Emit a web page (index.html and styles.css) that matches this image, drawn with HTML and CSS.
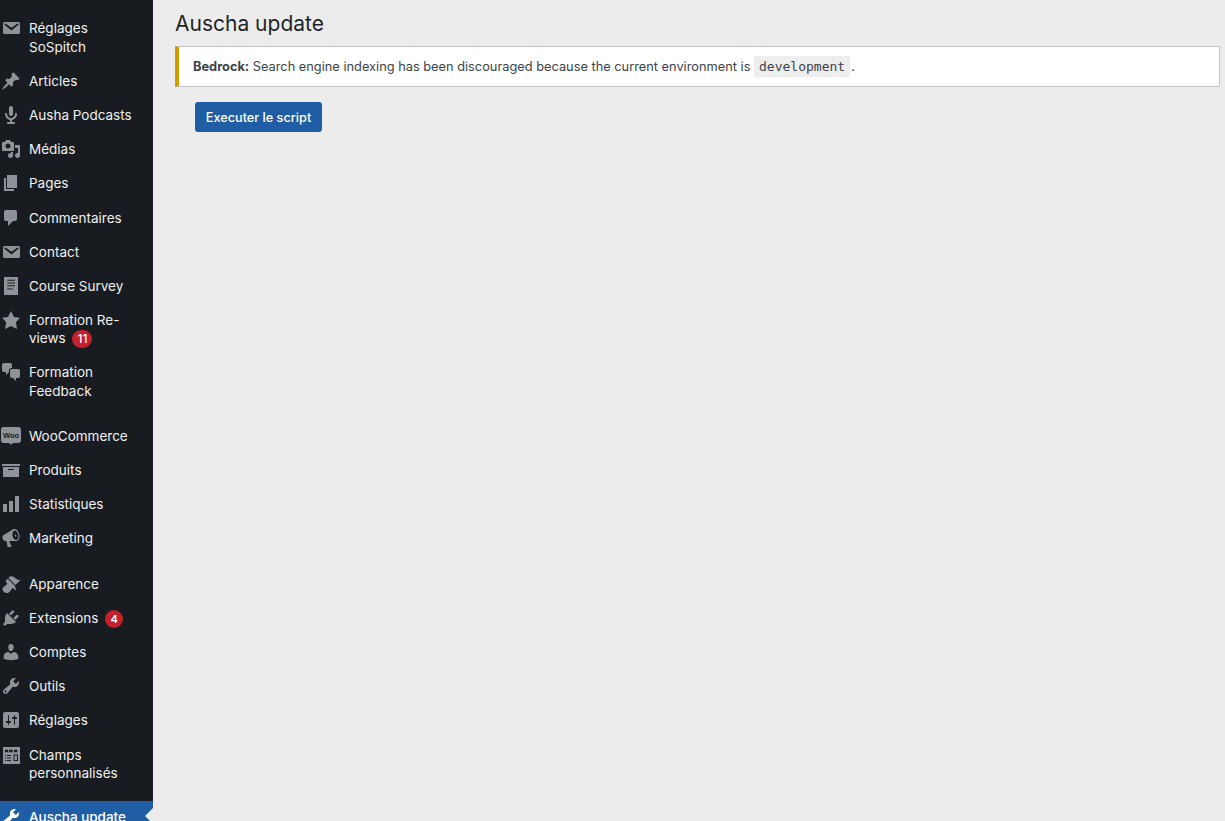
FILE: index.html
```html
<!DOCTYPE html>
<html lang="fr">
<head>
<meta charset="utf-8">
<title>Auscha update</title>
<link rel="stylesheet" href="styles.css">
</head>
<body>
<div class="page">
<nav class="sidebar">
<a class="item"><svg class="icon" viewBox="0 0 20 20"><path d="M3.87 4h13.25C18.37 4 19 4.59 19 5.79v8.42c0 1.19-.63 1.79-1.88 1.79H3.87c-1.25 0-1.88-.6-1.88-1.79V5.79c0-1.2.63-1.79 1.88-1.79zm6.62 8.6l6.74-5.53c.24-.2.43-.66.13-1.07-.29-.41-.82-.42-1.17-.17l-5.7 3.86L4.8 5.83c-.35-.25-.88-.24-1.17.17-.3.41-.11.87.13 1.07z"/></svg><span class="label">Réglages SoSpitch</span></a>
<a class="item"><svg class="icon" viewBox="0 0 20 20"><path d="M10.44 3.02l1.82-1.82 6.36 6.35-1.83 1.82c-1.05-.68-2.48-.57-3.41.36l-.75.75c-.92.93-1.04 2.35-.35 3.41l-1.83 1.82-2.41-2.41-2.8 2.79c-.42.42-3.38 2.71-3.8 2.29s1.86-3.39 2.28-3.81l2.79-2.79L4.1 9.36l1.83-1.82c1.05.69 2.48.57 3.4-.36l.75-.75c.93-.92 1.05-2.35.36-3.41z"/></svg><span class="label">Articles</span></a>
<a class="item"><svg class="icon" viewBox="0 0 20 20"><path d="M12 9V3c0-1.1-.89-2-2-2-1.12 0-2 .94-2 2v6c0 1.1.9 2 2 2 1.13 0 2-.94 2-2zm4 0c0 2.97-2.16 5.43-5 5.91V17h2c.56 0 1 .45 1 1s-.44 1-1 1H7c-.55 0-1-.45-1-1s.45-1 1-1h2v-2.09C6.17 14.43 4 11.97 4 9c0-.55.45-1 1-1 .56 0 1 .45 1 1 0 2.21 1.8 4 4 4 2.23 0 4-1.79 4-4 0-.55.45-1 1-1 .56 0 1 .45 1 1z"/></svg><span class="label">Ausha Podcasts</span></a>
<a class="item"><svg class="icon" viewBox="0 0 20 20"><path d="M13 11V4c0-.55-.45-1-1-1h-1.67L9 1H5L3.67 3H2c-.55 0-1 .45-1 1v7c0 .55.45 1 1 1h10c.55 0 1-.45 1-1zM7 4.5c1.38 0 2.5 1.12 2.5 2.5S8.38 9.5 7 9.5 4.5 8.38 4.5 7 5.62 4.5 7 4.5zM14 6h5v10.5c0 1.38-1.12 2.5-2.5 2.5S14 17.88 14 16.5s1.12-2.5 2.5-2.5c.17 0 .34.02.5.05V9h-3V6zm-4 8.05V13h2v3.5c0 1.38-1.12 2.5-2.5 2.5S7 17.88 7 16.5 8.12 14 9.5 14c.17 0 .34.02.5.05z"/></svg><span class="label">Médias</span></a>
<a class="item"><svg class="icon" viewBox="0 0 20 20"><path d="M6 15V2h10v13H6zm-1 1h8v2H3V5h2v11z"/></svg><span class="label">Pages</span></a>
<a class="item"><svg class="icon" viewBox="0 0 20 20"><path d="M5 2h9c1.1 0 2 .9 2 2v7c0 1.1-.9 2-2 2h-2l-5 5v-5H5c-1.1 0-2-.9-2-2V4c0-1.1.9-2 2-2z"/></svg><span class="label">Commentaires</span></a>
<a class="item"><svg class="icon" viewBox="0 0 20 20"><path d="M3.87 4h13.25C18.37 4 19 4.59 19 5.79v8.42c0 1.19-.63 1.79-1.88 1.79H3.87c-1.25 0-1.88-.6-1.88-1.79V5.79c0-1.2.63-1.79 1.88-1.79zm6.62 8.6l6.74-5.53c.24-.2.43-.66.13-1.07-.29-.41-.82-.42-1.17-.17l-5.7 3.86L4.8 5.83c-.35-.25-.88-.24-1.17.17-.3.41-.11.87.13 1.07z"/></svg><span class="label">Contact</span></a>
<a class="item"><svg class="icon" viewBox="0 0 20 20"><path fill-rule="evenodd" d="M3 1h14v18H3zM6.300 3.700v1h7.700v-1zM6.300 6.500v1h7.700v-1zM6.300 9.300v1h7.700v-1zM6.300 12.500v1h5.500v-1z"/></svg><span class="label">Course Survey</span></a>
<a class="item item-tight"><svg class="icon" viewBox="0 0 20 20"><path d="M10 1l3 6 6 .75-4.12 4.62L16 19l-6-3-6 3 1.13-6.63L1 7.75 7 7z"/></svg><span class="label">Formation Re-views <span class="badge badge-wide">11</span></span></a>
<a class="item"><svg class="icon" viewBox="0 0 20 20"><path d="M11 6h-.82C9.07 6 8 7.2 8 8.16V10l-3 3v-3H3c-1.1 0-2-.9-2-2V3c0-1.1.9-2 2-2h6c1.1 0 2 .9 2 2v3zm0 1h6c1.1 0 2 .9 2 2v5c0 1.1-.9 2-2 2h-2v3l-3-3h-1c-1.1 0-2-.9-2-2V9c0-1.1.9-2 2-2z"/></svg><span class="label">Formation Feedback</span></a>
<a class="item group"><svg class="icon" viewBox="0 0 20 20"><path d="M2.500 1h15C18.900 1 20 2.100 20 3.500v11c0 1.400-1.100 2.500-2.500 2.500H12l-2 1.700-2-1.700H2.500C1.100 17 0 15.900 0 14.500v-11C0 2.100 1.100 1 2.500 1z"/><text class="woo-text" x="10" y="11.600">Woo</text></svg><span class="label">WooCommerce</span></a>
<a class="item"><svg class="icon" viewBox="0 0 20 20"><path d="M19 4v2H1V4h18zM2 7h16v10H2V7zm11 3V9H7v1h6z"/></svg><span class="label">Produits</span></a>
<a class="item"><svg class="icon" viewBox="0 0 20 20"><path d="M18 18V2h-4v16h4zm-6 0V7H8v11h4zm-6 0v-8H2v8h4z"/></svg><span class="label">Statistiques</span></a>
<a class="item"><svg class="icon" viewBox="0 0 20 20"><path d="M18.15 5.94c.46 1.62.38 3.22-.02 4.48-.42 1.28-1.26 2.18-2.3 2.48-.16.06-.26.06-.4.06-.06.02-.12.02-.18.02-.06.02-.14.02-.22.02h-6.8l2.22 5.5c.02.14-.06.26-.14.34-.08.1-.24.16-.34.16H6.95c-.1 0-.26-.06-.34-.16-.08-.08-.16-.2-.14-.34l-1-5.5H4.25l-.02-.02c-.5.06-1.08-.18-1.54-.62s-.88-1.08-1.06-1.88c-.24-.8-.2-1.56-.02-2.2.18-.62.58-1.08 1.06-1.3l.02-.02 9-5.4c.1-.06.18-.1.24-.16.06-.04.14-.08.24-.12.16-.08.28-.12.5-.18 1.04-.3 2.24.1 3.22.98s1.76 2.18 2.22 3.86zm-2.58 5.98h-.02c.4-.1.74-.34 1.04-.7.58-.7.86-1.76.86-3.04-.02-.64-.1-1.3-.3-1.98-.2-.7-.48-1.32-.84-1.86-.72-1.1-1.68-1.72-2.58-1.72-.14 0-.28.02-.4.06-.4.1-.74.34-1.04.7-.58.7-.86 1.76-.86 3.04.02.64.1 1.3.3 1.98.2.7.48 1.32.84 1.86.72 1.1 1.68 1.72 2.58 1.72.14 0 .28-.02.42-.06zm-.28-4.4c-.14-.6-.58-1.02-.98-.92-.4.12-.58.66-.42 1.26.14.6.58 1.02.98.92.38-.12.58-.66.42-1.26z"/></svg><span class="label">Marketing</span></a>
<a class="item group-late"><svg class="icon" viewBox="0 0 20 20"><path d="M14.48 11.06L7.41 3.99l1.5-1.5c.5-.56 2.3-.47 3.51.32 1.21.8 1.43 1.28 2.91 2.1 1.18.64 2.45 1.26 4.45.85zm-.71.71L6.7 4.7 4.93 6.47c-.39.39-.39 1.02 0 1.41l1.06 1.06c.39.39.39 1.03 0 1.42-.6.6-1.43 1.11-2.21 1.69-.35.26-.7.53-1.01.84C1.43 13.23.78 15.78 2.78 17.78s4.53 1.34 5.89.03c.31-.31.59-.65.85-1 .58-.78 1.09-1.61 1.69-2.21.39-.39 1.03-.39 1.42 0l1.06 1.06c.39.39 1.02.39 1.41 0z"/></svg><span class="label">Apparence</span></a>
<a class="item"><svg class="icon" viewBox="0 0 20 20"><path d="M13.11 4.36L9.87 7.6 8 5.73l3.24-3.24c.35-.34 1.05-.2 1.56.32.52.51.66 1.21.31 1.55zm-8 1.77l.91-1.12 9.01 9.01-1.19.84c-.71.71-2.63 1.16-3.82 1.16H6.14L4.9 17.26c-.59.59-1.54.59-2.12 0-.59-.58-.59-1.53 0-2.12l1.24-1.24v-3.88c0-1.13.4-3.19 1.09-3.89zm7.26 3.97l3.24-3.24c.34-.35 1.04-.21 1.55.31.52.51.66 1.21.31 1.55l-3.24 3.25z"/></svg><span class="label">Extensions <span class="badge">4</span></span></a>
<a class="item"><svg class="icon" viewBox="0 0 20 20"><path d="M10 9.25c-2.27 0-2.73-3.44-2.73-3.44C7 4.02 7.82 2 9.97 2c2.16 0 2.98 2.02 2.71 3.81 0 0-.41 3.44-2.68 3.44zm0 2.57L12.72 10c2.39 0 4.52 2.33 4.52 4.53v2.49s-3.65 1.13-7.24 1.13c-3.65 0-7.24-1.13-7.24-1.13v-2.49c0-2.25 1.94-4.48 4.47-4.48z"/></svg><span class="label">Comptes</span></a>
<a class="item"><svg class="icon" viewBox="0 0 20 20"><path d="M16.68 9.77c-1.34 1.34-3.3 1.67-4.95.99l-5.41 6.52c-.99.99-2.59.99-3.58 0s-.99-2.59 0-3.57l6.52-5.42c-.68-1.65-.35-3.61.99-4.95 1.28-1.28 3.12-1.62 4.72-1.06l-2.89 2.89 2.82 2.82 2.86-2.87c.53 1.58.18 3.39-1.08 4.65zM3.81 16.21c.4.39 1.04.39 1.43 0 .4-.4.4-1.04 0-1.43-.39-.4-1.03-.4-1.43 0-.39.39-.39 1.03 0 1.43z"/></svg><span class="label">Outils</span></a>
<a class="item"><svg class="icon" viewBox="0 0 20 20"><path d="M18 16V4c0-1.1-.9-2-2-2H4c-1.1 0-2 .9-2 2v12c0 1.1.9 2 2 2h12c1.1 0 2-.9 2-2zM8 11h1c.55 0 1 .45 1 1s-.45 1-1 1H8v1.5c0 .28-.22.5-.5.5s-.5-.22-.5-.5V13H6c-.55 0-1-.45-1-1s.45-1 1-1h1V5.5c0-.28.22-.5.5-.5s.5.22.5.5V11zm5-2h-1c-.55 0-1-.45-1-1s.45-1 1-1h1V5.5c0-.28.22-.5.5-.5s.5.22.5.5V7h1c.55 0 1 .45 1 1s-.45 1-1 1h-1v5.5c0 .28-.22.5-.5.5s-.5-.22-.5-.5V9z"/></svg><span class="label">Réglages</span></a>
<a class="item"><svg class="icon" viewBox="0 0 20 20"><path fill-rule="evenodd" d="M2 2h17v17H2zM4 4.700v2.600h3.300V4.700zM8.300 4.700v2.600h3.400V4.700zM13 4.700v2.600h3.300V4.700zM4 10v1h1.200v-1zM6 10v1h4v-1zM4 12.500v1h1.200v-1zM6 12.500v1h4v-1zM4 15v1h1.200v-1zM6 15v1h4v-1zM12.500 9.500v6.500H17V9.500zM13.500 10.500h2.500v4.500h-2.500z"/></svg><span class="label">Champs personnalisés</span></a>
<a class="item active"><svg class="icon" viewBox="0 0 20 20"><path d="M16.68 9.77c-1.34 1.34-3.3 1.67-4.95.99l-5.41 6.52c-.99.99-2.59.99-3.58 0s-.99-2.59 0-3.57l6.52-5.42c-.68-1.65-.35-3.61.99-4.95 1.28-1.28 3.12-1.62 4.72-1.06l-2.89 2.89 2.82 2.82 2.86-2.87c.53 1.58.18 3.39-1.08 4.65zM3.81 16.21c.4.39 1.04.39 1.43 0 .4-.4.4-1.04 0-1.43-.39-.4-1.03-.4-1.43 0-.39.39-.39 1.03 0 1.43z"/></svg><span class="label">Auscha update</span></a>
</nav>
<main class="content">
<h1 class="title">Auscha update</h1>
<div class="notice"><strong>Bedrock:</strong> Search engine indexing has been discouraged because the current environment is <code class="code">development</code>.</div>
<button class="button" type="button">Executer le script</button>
</main>
</div>
</body>
</html>
```
FILE: styles.css
```css
* { box-sizing: border-box; }
html, body { margin: 0; height: 100%; overflow: hidden; }
body { font-family: Inter, "Liberation Sans", sans-serif; background: #ececed; color: #1f2428; }
.page { display: flex; height: 821px; overflow: hidden; }
.sidebar { flex: 0 0 153px; width: 153px; background: #181c20; padding-top: 12.1px; overflow: hidden; }
.item { position: relative; display: flex; align-items: flex-start; padding: 7px 0 8.8px 1px; color: #f0f0f1; font-size: 13.5px; line-height: 18.4px; }
.item-tight { margin-top: -0.3px; }
.group { margin-top: 10.8px; }
.group-late { margin-top: 11px; }
.active { margin-top: 10px; padding-bottom: 16px; background: #1f5ea5; color: #fff; font-weight: 500; }
.active::after { content: ""; position: absolute; right: 0; top: 7px; border: 8px solid transparent; border-right-color: #ececed; border-left-width: 0; }
.icon { flex: 0 0 20px; width: 20px; height: 20px; margin: -1px 0 -2px; fill: #8f9399; }
.active .icon { fill: #fff; }
.woo-text { font-family: "Liberation Sans", sans-serif; font-size: 7.500px; font-weight: 700; fill: #181c20; text-anchor: middle; }
.label { margin-left: 8px; width: 111px; }
.badge { display: inline-block; min-width: 18px; height: 18px; padding: 0 5px; margin: 1px 0 -1px 3px; border-radius: 9px; background: #c4202d; color: #fff; font-size: 11px; font-weight: 600; line-height: 18px; text-align: center; vertical-align: top; }
.badge-wide { min-width: 20px; font-size: 12px; font-weight: 500; }
.content { flex: 1; min-width: 0; padding: 0 5px 0 22px; }
.title { margin: 0; padding-top: 10px; font-size: 21px; font-weight: 400; line-height: 28px; color: #1f2428; }
.notice { margin-top: 8px; height: 41px; padding: 0 0 0 14px; display: flex; align-items: center; white-space: pre; background: #fff; border: 1px solid #c3c4c7; border-left: 4px solid #d39a00; font-size: 12.800px; color: #3c434a; }
.code { margin: 0 1px 0 0; padding: 3px 5px; background: #eeeeef; font-family: "DejaVu Sans Mono", monospace; font-size: 13px; line-height: 15px; }
.button { display: block; margin: 15px 0 0 20px; width: 127px; height: 30px; padding: 0; border: 0; border-radius: 3px; background: #1f5ea5; color: #fff; font-family: inherit; font-size: 12.700px; font-weight: 500; }
```
